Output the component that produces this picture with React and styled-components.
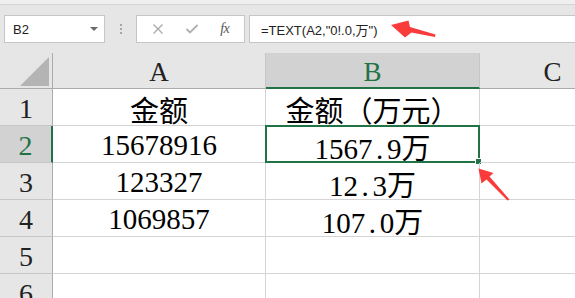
import React from "react";
import styled, { createGlobalStyle } from "styled-components";

const Global = createGlobalStyle`
  html, body { margin: 0; padding: 0; background: #fff; }
  body { width: 575px; height: 298px; overflow: hidden; }
`;

const Page = styled.div`
  position: relative;
  width: 575px;
  height: 298px;
  overflow: hidden;
  background: #fff;
`;

const Toolbar = styled.div`
  height: 53px;
  box-sizing: border-box;
  background: #e6e6e6;
  border-top: 4px solid #efefef;
  display: flex;
  flex-direction: column;
`;

const TopRule = styled.div`
  height: 1px;
  background: #d4d4d4;
`;

const BarRow = styled.div`
  display: flex;
  align-items: stretch;
  height: 28px;
  margin-top: 10px;
  padding-left: 4px;
`;

const NameBox = styled.div`
  width: 101px;
  box-sizing: border-box;
  background: #fff;
  border: 1px solid #c6c6c6;
  display: flex;
  align-items: center;
  justify-content: space-between;
  padding: 0 6px 0 8px;
  font-family: "Liberation Sans", Arial, sans-serif;
  font-size: 13px;
  color: #222;
`;

const Caret = styled.span`
  width: 0;
  height: 0;
  border-left: 4px solid transparent;
  border-right: 4px solid transparent;
  border-top: 4px solid #6a6a6a;
`;

const Grip = styled.div`
  width: 31px;
  display: flex;
  flex-direction: column;
  align-items: center;
  justify-content: center;
  gap: 2px;
  & > span {
    width: 2px;
    height: 2px;
    background: #a6a6a6;
  }
`;

const FxBox = styled.div`
  width: 109px;
  box-sizing: border-box;
  background: #fff;
  border: 1px solid #c6c6c6;
  display: flex;
  align-items: center;
  justify-content: space-around;
  padding: 0 4px;
`;

const FxText = styled.span`
  font-family: "Liberation Serif", "Times New Roman", serif;
  font-style: italic;
  font-size: 14px;
  color: #555;
  letter-spacing: -0.5px;
`;

const FormulaInput = styled.div`
  flex: 1;
  margin-left: 4px;
  box-sizing: border-box;
  background: #fff;
  border: 1px solid #c6c6c6;
  border-right: none;
  display: flex;
  align-items: center;
  padding-left: 11px;
  font-family: "Liberation Sans", Arial, "Noto Sans CJK SC", sans-serif;
  font-size: 13px;
  color: #222;
  white-space: nowrap;
`;

const Sheet = styled.div`
  display: grid;
  grid-template-columns: 53px 213px 214px 146px;
  grid-template-rows: 36px repeat(6, 37px);
  background: #fff;
`;

const Corner = styled.div`
  position: relative;
  background: #e6e6e6;
  box-sizing: border-box;
  border-right: 1px solid #ababab;
  border-bottom: 1px solid #ababab;
  display: flex;
  align-items: flex-end;
  justify-content: flex-end;
  padding: 0 3px 2px 0;
`;

const ColHead = styled.div`
  box-sizing: border-box;
  background: ${(p) => (p.$active ? "#d2d2d2" : "#e6e6e6")};
  border-right: 1px solid #c6c6c6;
  border-bottom: ${(p) => (p.$active ? "2px solid #217346" : "1px solid #ababab")};
  color: ${(p) => (p.$active ? "#217346" : "#222")};
  font-family: "Liberation Serif", "Times New Roman", serif;
  font-size: 27px;
  display: flex;
  align-items: center;
  justify-content: center;
  padding-top: ${(p) => (p.$active ? "5px" : "4px")};
`;

const RowHead = styled.div`
  box-sizing: border-box;
  background: ${(p) => (p.$active ? "#d2d2d2" : "#e6e6e6")};
  border-right: ${(p) => (p.$active ? "2px solid #217346" : "1px solid #ababab")};
  border-bottom: 1px solid #c6c6c6;
  color: ${(p) => (p.$active ? "#217346" : "#222")};
  font-family: "Liberation Serif", "Times New Roman", serif;
  font-size: 28px;
  display: flex;
  align-items: center;
  justify-content: center;
  padding-top: 3px;
`;

const Cell = styled.div`
  position: relative;
  box-sizing: border-box;
  border-right: 1px solid #d4d4d4;
  border-bottom: 1px solid #d4d4d4;
  color: #000;
  font-family: "Liberation Serif", "Times New Roman", "Noto Sans CJK SC", serif;
  font-size: 29px;
  display: flex;
  align-items: center;
  justify-content: center;
  padding-top: 3px;
  white-space: nowrap;
`;

const Value = styled.span`
  display: inline;
`;

/* half-width period, as in the sheet's Song-style font */
const Dot = styled.span`
  display: inline-block;
  width: 0.5em;
  text-align: center;
`;

const Selection = styled.div`
  position: absolute;
  left: -1px;
  top: -1px;
  right: -1px;
  bottom: -1px;
  border: 2px solid #217346;
  pointer-events: none;
`;

const FillHandle = styled.div`
  position: absolute;
  right: -4px;
  bottom: -4px;
  width: 5px;
  height: 5px;
  background: #217346;
  border: 1px solid #fff;
`;

const Overlay = styled.svg`
  position: absolute;
  left: 0;
  top: 0;
  pointer-events: none;
`;

const rows = [
  ["金额", "金额（万元）"],
  ["15678916", "1567.9万"],
  ["123327", "12.3万"],
  ["1069857", "107.0万"],
  ["", ""],
  ["", ""],
];

function CellText({ text }) {
  const parts = text.split(".");
  return (
    <Value>
      {parts.map((p, i) => (
        <React.Fragment key={i}>
          {i > 0 && <Dot>.</Dot>}
          {p}
        </React.Fragment>
      ))}
    </Value>
  );
}

export default function App() {
  return (
    <Page>
      <Global />
      <Toolbar>
        <TopRule />
        <BarRow>
          <NameBox>
            B2
            <Caret />
          </NameBox>
          <Grip>
            <span />
            <span />
            <span />
          </Grip>
          <FxBox>
            <svg width="12" height="12" viewBox="0 0 12 12">
              <path d="M1.5 1.5 L10.5 10.5 M10.5 1.5 L1.5 10.5" stroke="#a8a8a8" strokeWidth="1.3" fill="none" />
            </svg>
            <svg width="14" height="12" viewBox="0 0 14 12">
              <path d="M1.5 6 L5 9.5 L12.5 2" stroke="#b0b0b0" strokeWidth="1.8" fill="none" />
            </svg>
            <FxText>fx</FxText>
          </FxBox>
          <FormulaInput>=TEXT(A2,"0!.0,万")</FormulaInput>
        </BarRow>
      </Toolbar>
      <Sheet>
        <Corner>
          <svg width="29" height="29" viewBox="0 0 29 29">
            <polygon points="29,0 29,29 0,29" fill="#b4b4b4" />
          </svg>
        </Corner>
        <ColHead>A</ColHead>
        <ColHead $active>B</ColHead>
        <ColHead>C</ColHead>
        {rows.map((r, i) => (
          <React.Fragment key={i}>
            <RowHead $active={i === 1}>{i + 1}</RowHead>
            <Cell>{r[0] && <CellText text={r[0]} />}</Cell>
            <Cell>
              {r[1] && <CellText text={r[1]} />}
              {i === 1 && (
                <Selection>
                  <FillHandle />
                </Selection>
              )}
            </Cell>
            <Cell />
          </React.Fragment>
        ))}
      </Sheet>
      <Overlay width="575" height="298" viewBox="0 0 575 298">
        <polygon
          points="391,25 408.5,20.5 410,27 435.5,34.5 435,37 411.5,32.5 405,37.5"
          fill="#fa3b3b"
        />
        <polygon
          points="478.5,168.5 493.5,173 489.5,176.5 509.5,199.5 507.5,200.5 486.5,179.5 481.5,183.5"
          fill="#fa3b3b"
        />
      </Overlay>
    </Page>
  );
}
